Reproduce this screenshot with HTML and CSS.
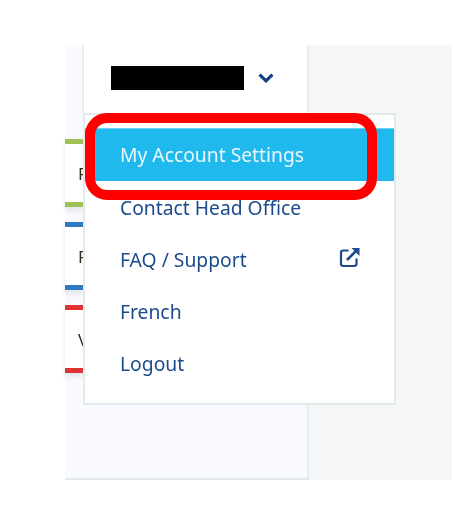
FILE: index.html
```html
<!DOCTYPE html>
<html lang="en">
<head>
<meta charset="utf-8">
<title>Account menu</title>
<link rel="stylesheet" href="styles.css">
</head>
<body>
<div class="app">
  <aside class="side">
    <header class="user">
      <span class="redact"></span>
      <svg class="chevron" viewBox="0 0 16 10" width="16" height="10" aria-hidden="true"><path d="M1.6 1.6 8 7.8l6.4-6.2" fill="none" stroke="currentColor" stroke-width="3.2"/></svg>
    </header>
    <div class="list">
      <div class="card green"><span>F</span></div>
      <div class="card blue"><span>F</span></div>
      <div class="card red"><span>V</span></div>
    </div>
  </aside>
  <main class="panel"></main>
</div>
<nav class="menu">
  <a class="item active">My Account Settings</a>
  <a class="item">Contact Head Office</a>
  <a class="item">FAQ / Support
    <svg class="ext" viewBox="0 0 22 22" width="22" height="22" aria-hidden="true"><path d="M9.5 4.5H4.2A2.2 2.2 0 0 0 2 6.7v11.1A2.2 2.2 0 0 0 4.2 20h11.1a2.2 2.2 0 0 0 2.2-2.2v-5.3" fill="none" stroke="currentColor" stroke-width="2.2"/><path d="M8 14 19 3" fill="none" stroke="currentColor" stroke-width="2.6"/><path d="M12.5 2H20.5V10Z" fill="currentColor"/></svg>
  </a>
  <a class="item">French</a>
  <a class="item">Logout</a>
</nav>
<div class="highlight"></div>
</body>
</html>
```
FILE: styles.css
```css
* { box-sizing: border-box; }
html, body { margin: 0; background: #fff; }
body { width: 452px; height: 528px; position: relative; overflow: hidden; font-family: "Noto Sans", "Open Sans", sans-serif; }
.app { display: flex; height: 435px; margin: 45px 0 0 65px; filter: blur(0.3px); }
.side { width: 244px; display: flex; flex-direction: column; border-right: 2px solid #e6edef; border-bottom: 2px solid #e1e7ea; background: #f8faff; }
.user { height: 68px; margin-left: 17px; padding: 21px 0 0 27px; display: flex; align-items: flex-start; gap: 14px; background: #fff; border-left: 2px solid #e8eef1; }
.redact { width: 133px; height: 24px; background: #000; }
.chevron { margin-top: 7px; color: #103f7f; }
.list { display: flex; flex-direction: column; gap: 15px; padding-top: 26px; }
.card { width: 18px; height: 68px; overflow: hidden; background: #fff; border-top: 5px solid; border-bottom: 5px solid; display: flex; align-items: center; font-size: 17px; color: #3a2a1c; box-shadow: 0 4px 5px #e4e6ea; }
.card span { margin-left: 13px; }
.green { border-color: #9cc354; }
.blue { border-color: #2f79c4; }
.red { border-color: #dd3333; }
.panel { flex: 1; background: #f4f6f8; }
.menu { position: absolute; left: 83px; top: 113px; width: 313px; height: 292px; padding-top: 13px; background: #fff; border: 2px solid #e3eaec; color: #1b4b8a; font-size: 19.3px; filter: blur(0.3px); }
.item { height: 52px; padding: 0 33px 0 35px; display: flex; align-items: center; justify-content: space-between; }
.active { height: 53px; padding-bottom: 2px; background: #20b9ee; color: #e8f8fe; border-top: 1px solid #6fd0f3; }
.ext { color: #1b4b8a; margin-bottom: 5px; }
.highlight { position: absolute; left: 85px; top: 113px; width: 292px; height: 87px; border: 10px solid #ff0000; border-radius: 22px; }
```
